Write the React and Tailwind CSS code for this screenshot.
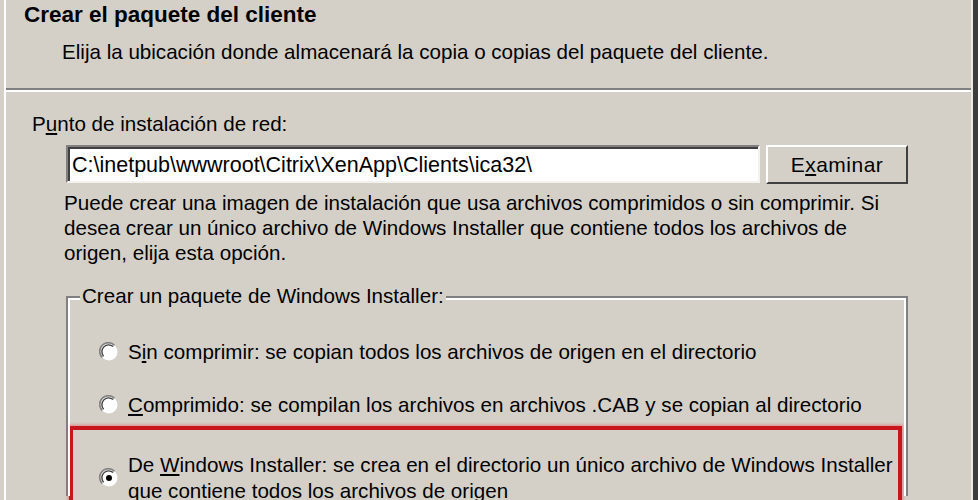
import React from "react";

const Radio = ({ checked }) => (
  <svg width="20" height="20" viewBox="0 0 20 20" className="shrink-0">
    <circle cx="10" cy="10" r="8.5" fill="#ffffff" />
    <path d="M3.2 15.5 A8.5 8.5 0 0 1 15.5 3.2" fill="none" stroke="#808080" strokeWidth="1.6" />
    <path d="M4.6 14.2 A6.8 6.8 0 0 1 14.2 4.6" fill="none" stroke="#404040" strokeWidth="1.4" />
    <path d="M15.8 4.6 A8.5 8.5 0 0 1 4.6 15.8" fill="none" stroke="#ffffff" strokeWidth="1.6" />
    {checked && <circle cx="10" cy="10" r="3" fill="#000000" />}
  </svg>
);

const U = ({ children }) => <span className="underline underline-offset-2">{children}</span>;

const App = () => {
  return (
    <div
      className="w-[978px] h-[500px] overflow-hidden bg-[#d4d0c8] text-black pl-[4px]"
      style={{ fontFamily: '"Liberation Sans", Arial, sans-serif' }}
    >
      <div className="h-full border-l-2 border-white border-r-[5px] border-r-[#3c3c3c]">
        <div className="h-full border-r-2 border-r-[#ece9e4]">
          <div className="h-[88px] pl-[18px] pt-[2px]">
            <h1 className="text-[22.5px] leading-[26px] font-bold">Crear el paquete del cliente</h1>
            <p className="text-[20.6px] leading-[24px] mt-[12px] pl-[38px]">
              Elija la ubicación donde almacenará la copia o copias del paquete del cliente.
            </p>
          </div>
          <div className="border-t-2 border-[#808080] border-b-2 border-b-white" />

          <div className="pl-[26px] pt-[20px] text-[20.6px]">
            <p className="leading-[24px]">
              P<U>u</U>nto de instalación de red:
            </p>
            <div className="flex items-start gap-[6px] mt-[9px] pl-[34px]">
              <div className="w-[694px] h-[38px] bg-white border-t-2 border-l-2 border-[#808080] border-b-2 border-r-2 border-b-[#f4f2ee] border-r-[#f4f2ee]">
                <div className="h-full border-t-2 border-l-2 border-[#404040] flex items-center pl-[2px] text-[21.5px]">
                  C:\inetpub\wwwroot\Citrix\XenApp\Clients\ica32\
                </div>
              </div>
              <button className="w-[142px] h-[39px] border-t-2 border-l-2 border-white border-b-2 border-r-2 border-b-[#404040] border-r-[#404040] bg-[#d4d0c8] text-[21px] tracking-[0.5px]">
                E<U>x</U>aminar
              </button>
            </div>
            <p className="leading-[25px] mt-[6px] pl-[32px]">
              Puede crear una imagen de instalación que usa archivos comprimidos o sin comprimir. Si
              <br />
              desea crear un único archivo de Windows Installer que contiene todos los archivos de
              <br />
              origen, elija esta opción.
            </p>

            <div className="mt-[31px] ml-[34px] w-[842px] border-t-2 border-l-2 border-r-2 border-[#808080] h-[200px] relative">
              <div className="absolute inset-0 border-t-2 border-l-2 border-r-2 border-white" />
              <span className="absolute -top-[14px] left-[12px] bg-[#d4d0c8] px-[2px] leading-[24px]">
                Crear un paquete de Windows Installer:
              </span>
              <div className="pt-[42px] pl-[31px]">
                <div className="flex items-center gap-[9px] h-[24px]">
                  <Radio />
                  <span>S<U>i</U>n comprimir: se copian todos los archivos de origen en el directorio</span>
                </div>
                <div className="flex items-center gap-[9px] h-[24px] mt-[29px]">
                  <Radio />
                  <span><U>C</U>omprimido: se compilan los archivos en archivos .CAB y se copian al directorio</span>
                </div>
              </div>
              <div className="mt-[9px] ml-[1px] w-[833px] h-[100px] border-[4px] border-[#c8141c] shadow-[0_0_3px_1px_rgba(230,80,80,0.6)] pt-[22px] pl-[26px]">
                <div className="flex items-center gap-[9px] leading-[26px]">
                  <Radio checked />
                  <span className="whitespace-nowrap">
                    De <U>W</U>indows Installer: se crea en el directorio un único archivo de Windows Installer
                    <br />
                    que contiene todos los archivos de origen
                  </span>
                </div>
              </div>
            </div>
          </div>
        </div>
      </div>
    </div>
  );
};

export default App;
